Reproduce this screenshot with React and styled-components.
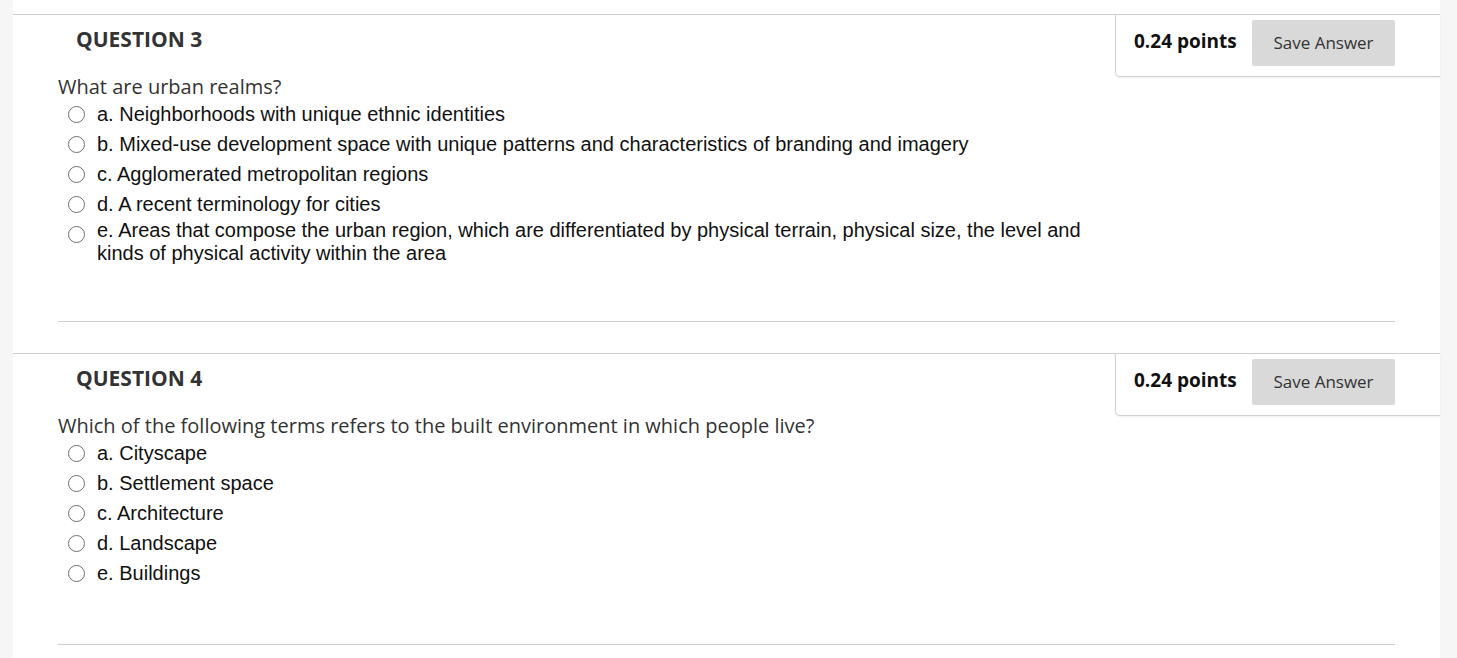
import React from 'react'
import styled, { createGlobalStyle } from 'styled-components'

const questions = [
    {
        number: 3,
        points: '0.24 points',
        text: 'What are urban realms?',
        options: [
            'a. Neighborhoods with unique ethnic identities',
            'b. Mixed-use development space with unique patterns and characteristics of branding and imagery',
            'c. Agglomerated metropolitan regions',
            'd. A recent terminology for cities',
            'e. Areas that compose the urban region, which are differentiated by physical terrain, physical size, the level and kinds of physical activity within the area',
        ],
    },
    {
        number: 4,
        points: '0.24 points',
        text: 'Which of the following terms refers to the built environment in which people live?',
        options: [
            'a. Cityscape',
            'b. Settlement space',
            'c. Architecture',
            'd. Landscape',
            'e. Buildings',
        ],
    },
]

function App() {
    return (
        <>
            <GlobalStyle />
            <Page>
                <Content>
                    {questions.map((q) => (
                        <Question key={q.number}>
                            <Header>
                                <Title>QUESTION {q.number}</Title>
                                <PointsBox>
                                    <Points>{q.points}</Points>
                                    <Save_Button>Save Answer</Save_Button>
                                </PointsBox>
                            </Header>
                            <Body>
                                <Question_Text>{q.text}</Question_Text>
                                <Options>
                                    {q.options.map((opt) => (
                                        <Option key={opt}>
                                            <Radio />
                                            <Option_Label>{opt}</Option_Label>
                                        </Option>
                                    ))}
                                </Options>
                                <Divider />
                            </Body>
                        </Question>
                    ))}
                </Content>
            </Page>
        </>
    )
}

export default App


const GlobalStyle = createGlobalStyle`
    html, body {
        margin: 0;
        padding: 0;
        background: #f6f6f6;
    }
`

const Page = styled.div`
    display: flex;
    min-height: 100vh;
    background: #f6f6f6;
`

const Content = styled.div`
    margin-left: 13px;
    width: 1427px;
    background: #fff;
    padding-top: 14px;
    font-family: "Open Sans", sans-serif;
`

const Question = styled.section`
    border-top: 1px solid #cfcfcf;
    padding-bottom: 31px;
`

const Header = styled.div`
    display: flex;
    justify-content: space-between;
    align-items: flex-start;
    height: 62px;
`

const Title = styled.h2`
    margin: 0;
    padding: 10px 0 0 63px;
    font-size: 21px;
    line-height: 28px;
    font-weight: 700;
    color: #333;
`

const PointsBox = styled.div`
    box-sizing: border-box;
    width: 325px;
    height: 62px;
    display: flex;
    align-items: center;
    padding: 5px 45px 10px 18px;
    border-left: 1px solid #d4d4d4;
    border-bottom: 1px solid #cfcfcf;
    border-bottom-left-radius: 5px;
    box-shadow: 0 1px 2px rgba(0, 0, 0, 0.08);
    background: #fff;
`

const Points = styled.span`
    font-size: 19px;
    font-weight: 700;
    color: #111;
    margin-bottom: 4px;
`

const Save_Button = styled.button`
    margin-left: auto;
    width: 143px;
    height: 46px;
    border: none;
    border-radius: 2px;
    background: #d9d9d9;
    color: #333;
    font-family: "Open Sans", sans-serif;
    font-size: 17px;
    padding-bottom: 2px;
    cursor: pointer;
`

const Body = styled.div`
    padding: 0 45px;
`

const Question_Text = styled.p`
    margin: 0;
    font-size: 20px;
    line-height: 20px;
    color: #333;
`

const Options = styled.div`
    margin-top: 2px;
    width: 1035px;
`

const Option = styled.div`
    display: flex;
    align-items: center;
    min-height: 30px;
    padding-left: 10px;
`

const Radio = styled.span`
    flex: none;
    align-self: flex-start;
    box-sizing: border-box;
    width: 17px;
    height: 17px;
    margin-top: 6.5px;
    border: 1.5px solid #707070;
    border-radius: 50%;
    background: #fff;
`

const Option_Label = styled.span`
    margin-left: 12px;
    font-family: "Liberation Sans", Arial, sans-serif;
    font-size: 20px;
    line-height: 23px;
    color: #111;
`

const Divider = styled.hr`
    margin: 56px 0 0;
    border: none;
    border-top: 1px solid #cfcfcf;
`
